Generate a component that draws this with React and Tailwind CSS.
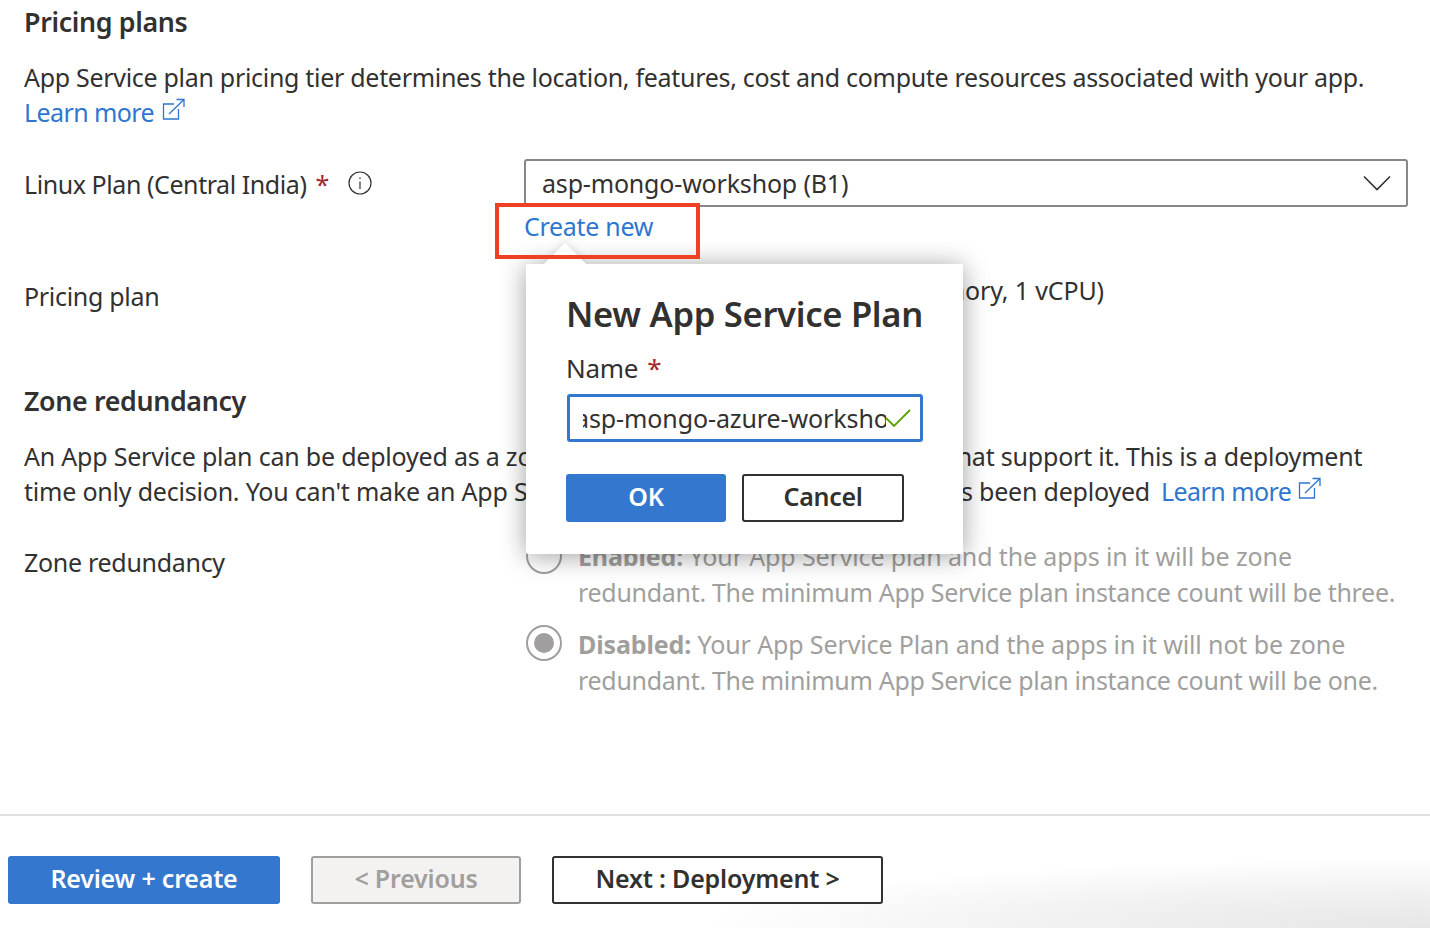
const blue = 'text-[#2f76cf]';

function ExternalIcon({ className }) {
  return (
    <svg viewBox="0 0 24 24" width="24" height="24" fill="none" stroke="currentColor" strokeWidth="1.3" className={className}>
      <path d="M13 6H2.5v15h15V11" />
      <path d="M8 16 22.5 2M15.5 1.5h7.5V9" />
    </svg>
  );
}

function Star() {
  return <span className="text-[#a4262c]">*</span>;
}

function Radio({ checked, className }) {
  return (
    <span className={`flex h-9 w-9 shrink-0 items-center justify-center rounded-full border-2 border-[#a19f9d] ${className}`}>
      {checked && <span className="h-5 w-5 rounded-full bg-[#a19f9d]" />}
    </span>
  );
}

export default function App() {
  return (
    <div className="relative h-[928px] w-[1430px] overflow-hidden bg-white text-[25px] leading-[35px] tracking-[-0.3px] text-[#323130] [font-family:'Noto_Sans',sans-serif]">
      <div className="pl-6 pr-[22px] pt-1">
        <h2 className="text-[26.8px] font-semibold tracking-[-0.35px]">Pricing plans</h2>
        <p className="mt-[21px] whitespace-nowrap">App Service plan pricing tier determines the location, features, cost and compute resources associated with your app.</p>
        <a className={`flex items-center gap-[7px] tracking-[-0.6px] ${blue}`}>
          Learn more <ExternalIcon className="mb-[6px]" />
        </a>

        <div className="mt-[29px] flex">
          <div className="flex w-[500px] items-center self-start pt-2">
            <span className="flex gap-[9px] tracking-[-0.43px]"><span>Linux Plan (Central India)</span> <Star /></span>
            <svg viewBox="0 0 24 24" width="24" height="24" fill="none" stroke="#323130" strokeWidth="1.2" className="mb-1 ml-[19px]">
              <circle cx="12" cy="12" r="11" />
              <path d="M12 10.5V18M12 6.5v1.6" />
            </svg>
          </div>
          <div className="flex-1">
            <div className="flex h-12 items-center justify-between rounded-[3px] border-2 border-[#8a8886] pl-4 pr-[15px]">
              <span className="tracking-[-0.18px]">asp-mongo-workshop (B1)</span>
              <svg viewBox="0 0 28 16" width="28" height="16" fill="none" stroke="#323130" strokeWidth="1.6"><path d="M1 1.5 14 14.5 27 1.5" /></svg>
            </div>
            <a className={`mt-[2px] block ${blue}`}>Create new</a>
          </div>
        </div>

        <div className="mt-[18px] flex">
          <div className="w-[500px] pt-[17px]">Pricing plan</div>
          <div className="pl-[5px] pt-[11px] tracking-[-0.15px]">Basic B1 (100 total ACU, 1.75 GB memory, 1 vCPU)</div>
        </div>

        <h2 className="mt-[69px] text-[26.8px] font-semibold tracking-[-0.35px]">Zone redundancy</h2>
        <p className="mt-[21px] whitespace-nowrap tracking-[-0.21px]">An App Service plan can be deployed as a zone redundant service in the regions that support it. This is a deployment</p>
        <p className="flex items-center whitespace-nowrap tracking-[-0.21px]">
          time only decision. You can't make an App Service plan zone redundant after it has been deployed
          <a className={`ml-[11px] flex items-center gap-[6px] tracking-[-0.55px] ${blue}`}>Learn more <ExternalIcon className="mb-[6px]" /></a>
        </p>

        <div className="mt-[21px] flex">
          <div className="w-[502px] pt-[15px]">Zone redundancy</div>
          <div className="leading-[36px] text-[#a19f9d]">
            <div className="flex gap-4">
              <Radio className="mt-2" />
              <div className="pt-2 whitespace-nowrap">
                <p className="tracking-[-0.13px]"><b className="font-bold">Enabled:</b> Your App Service plan and the apps in it will be zone</p>
                <p className="tracking-[-0.3px]">redundant. The minimum App Service plan instance count will be three.</p>
              </div>
            </div>
            <div className="mt-4 flex gap-4">
              <Radio checked className="-mt-px" />
              <div className="whitespace-nowrap">
                <p className="tracking-[-0.13px]"><b className="font-bold">Disabled:</b> Your App Service Plan and the apps in it will not be zone</p>
                <p className="tracking-[-0.3px]">redundant. The minimum App Service plan instance count will be one.</p>
              </div>
            </div>
          </div>
        </div>
      </div>

      <div className="mt-[116px] h-[2px] bg-[#e1e1e1]" />

      <div className="relative z-10 mt-10 flex gap-[31px] pl-2 font-semibold tracking-[-0.2px]">
        <button className="h-12 w-[272px] rounded-[3px] bg-[#3477ce] pb-[3px] text-white">Review + create</button>
        <button className="h-12 w-[210px] rounded-[3px] border-2 border-[#a19f9d] bg-[#f3f2f1] pb-[3px] text-[#a19f9d]">&lt; Previous</button>
        <button className="h-12 w-[331px] rounded-[3px] border-2 border-[#323130] bg-white pb-[3px]">Next : Deployment &gt;</button>
      </div>

      {/* sombra de la esquina inferior */}
      <div className="absolute bottom-0 right-0 h-[90px] w-[760px] bg-[radial-gradient(ellipse_740px_70px_at_100%_100%,#e6e6e6_0%,#f2f2f2_55%,#ffffff_100%)]" />

      {/* popup sobre el formulario */}
      <div className="absolute left-[526px] top-[264px] h-[290px] w-[437px] rounded-[2px] bg-white px-10 pt-[30px] shadow-[0_2px_26px_rgba(0,0,0,0.38)]">
        <div className="absolute left-[24px] top-[-15px] h-[30px] w-[30px] rotate-45 bg-white shadow-[-3px_-3px_6px_rgba(0,0,0,0.08)]" />
        <div className="absolute left-0 top-0 h-[20px] w-full bg-white" />
        <h3 className="relative whitespace-nowrap text-[34.6px] font-semibold leading-[40px]">New App Service Plan</h3>
        <label className="mt-[17px] flex gap-[9px] text-[26px]"><span>Name</span> <Star /></label>
        <div className="ml-px mt-2 flex h-12 w-[356px] items-center overflow-hidden rounded-[3px] border-[3px] border-[#3477ce]">
          <div className="ml-[13px] w-[303px] shrink-0 overflow-hidden">
            <span className="-ml-2 block whitespace-nowrap tracking-[-0.1px]">asp-mongo-azure-workshop</span>
          </div>
          <svg viewBox="0 0 26 18" width="26" height="18" fill="none" stroke="#57a300" strokeWidth="1.8" className="-ml-px"><path d="M1 9 9 17 25 1" /></svg>
        </div>
        <div className="mt-8 flex gap-4 font-semibold">
          <button className="h-12 w-[160px] rounded-[3px] bg-[#3477ce] pb-[3px] text-white">OK</button>
          <button className="h-12 w-[162px] rounded-[3px] border-2 border-[#323130] pb-[3px]">Cancel</button>
        </div>
      </div>

      {/* recuadro rojo de la captura */}
      <div className="absolute left-[495px] top-[203px] h-[56px] w-[205px] border-4 border-[#ee4023]" />
    </div>
  );
}
